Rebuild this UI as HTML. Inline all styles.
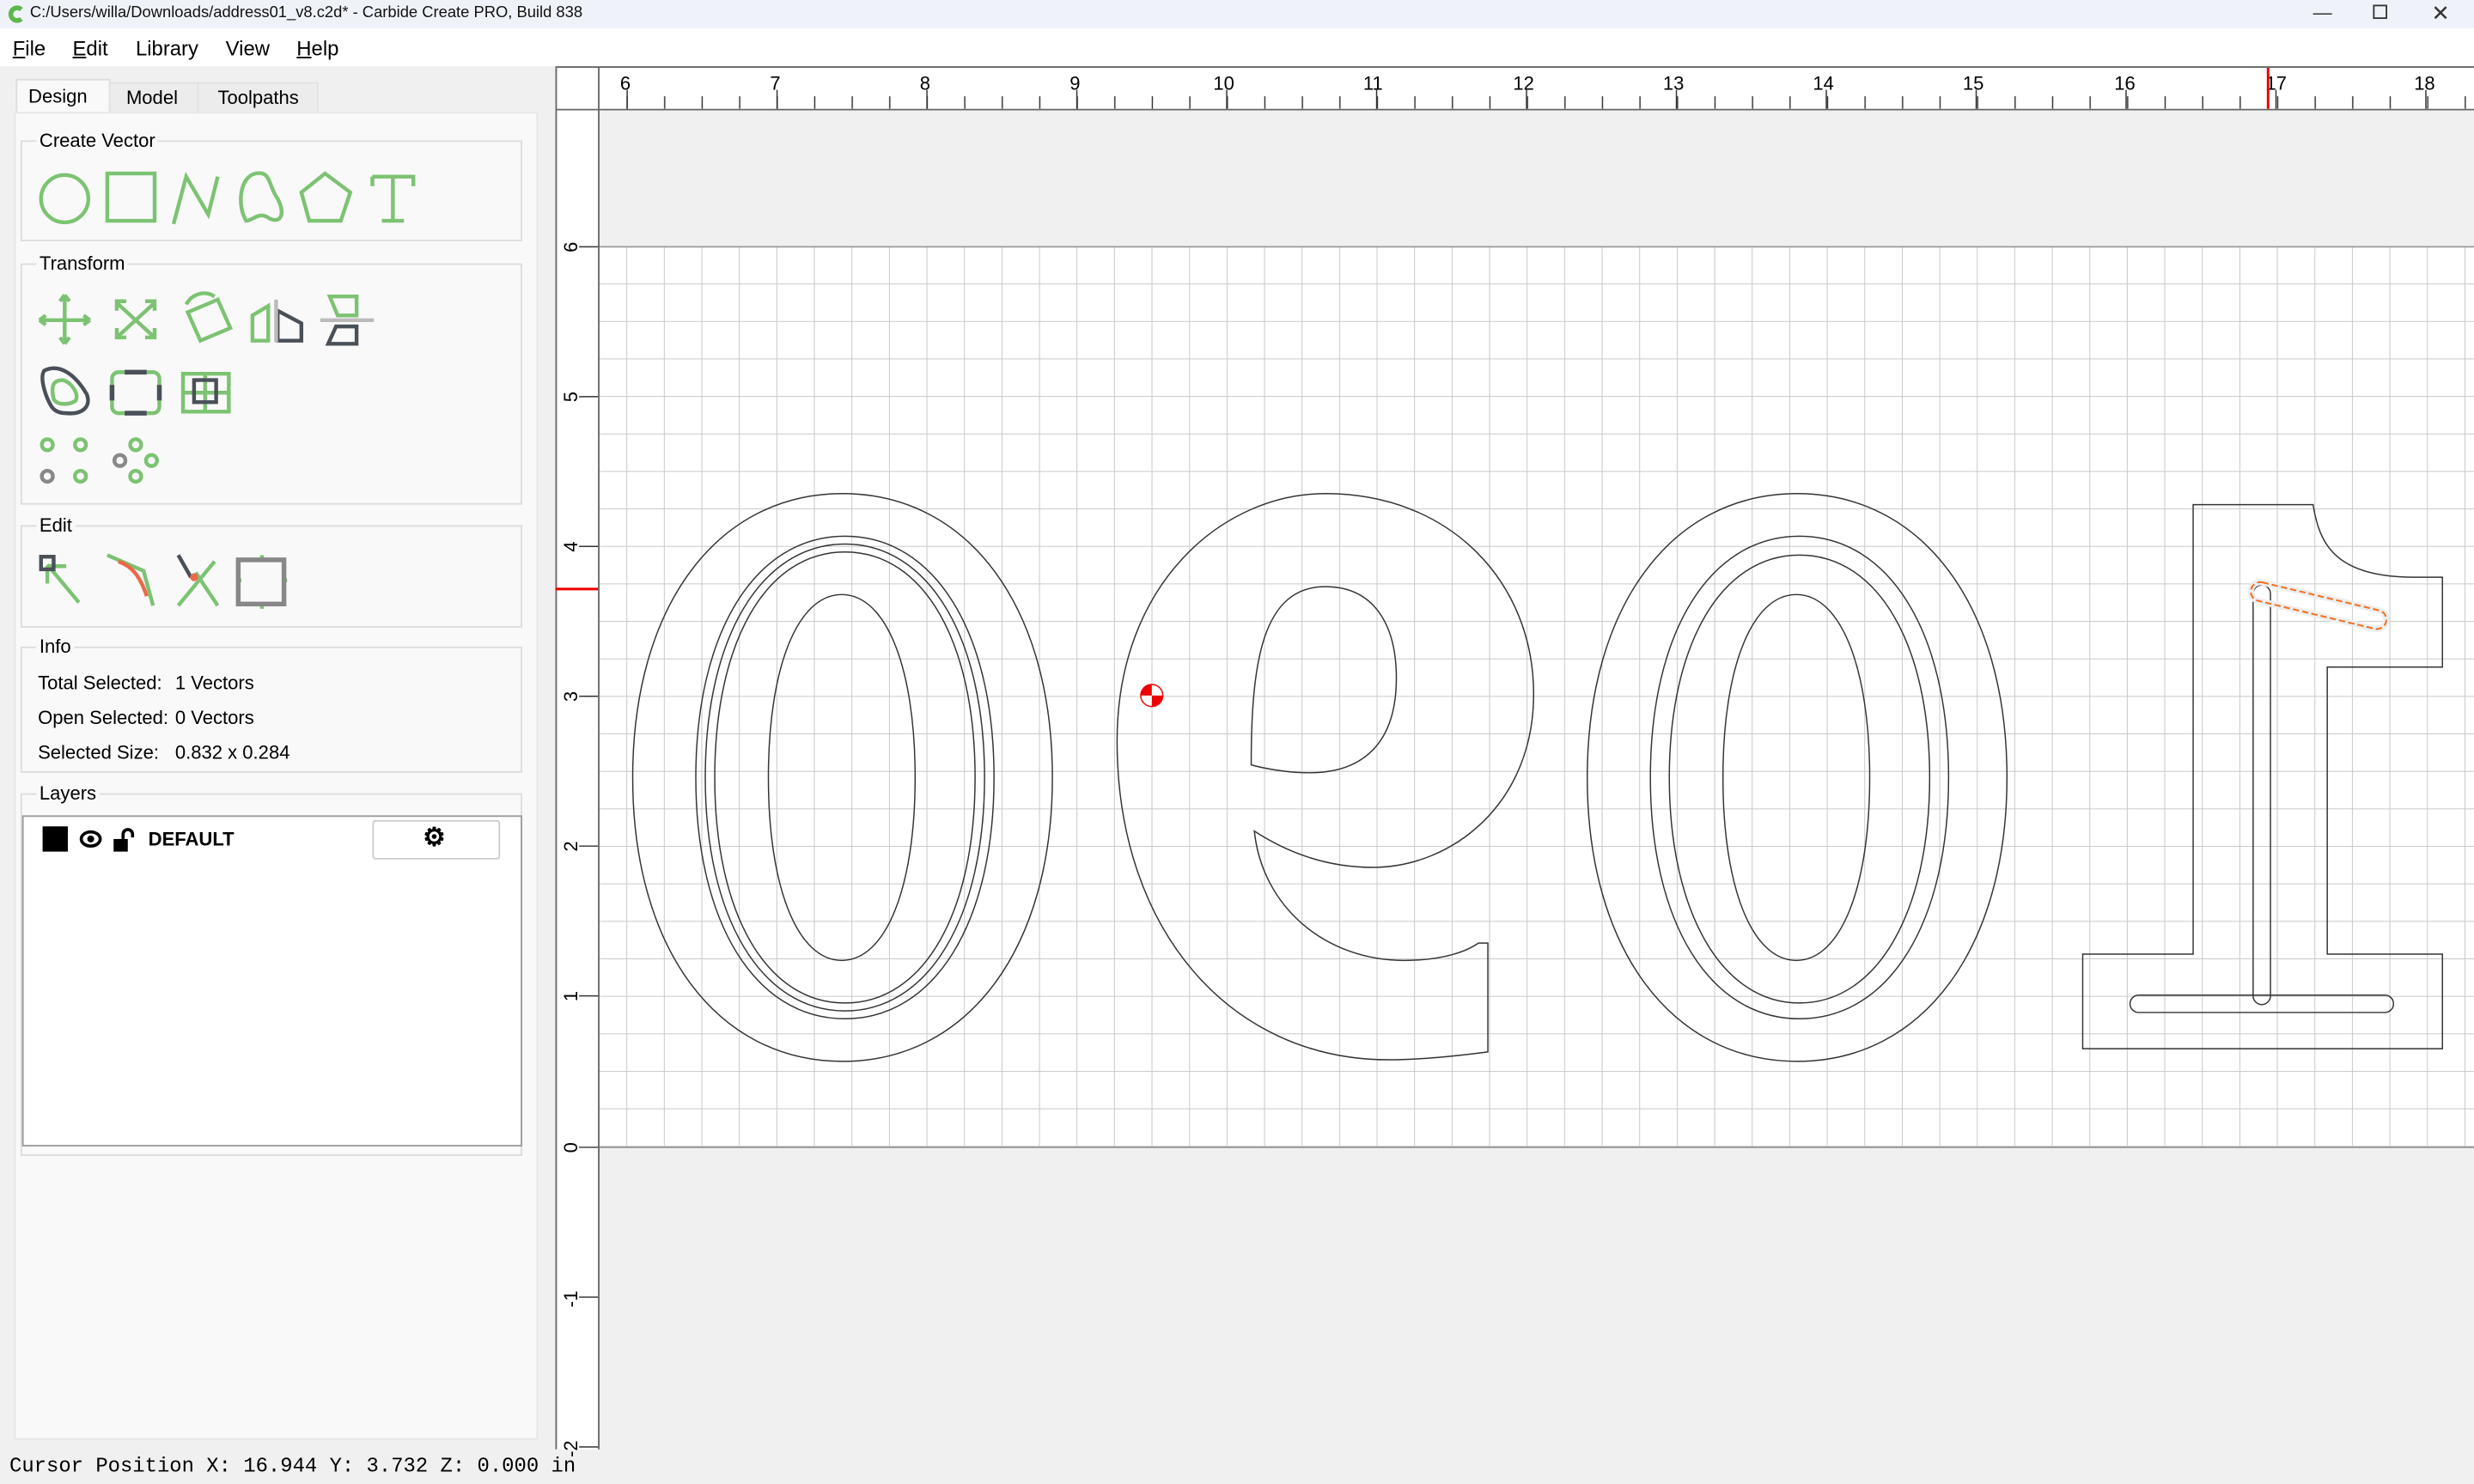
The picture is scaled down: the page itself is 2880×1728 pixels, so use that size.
<!DOCTYPE html>
<html><head><meta charset="utf-8"><style>
html,body{margin:0;padding:0;width:2880px;height:1728px;overflow:hidden;background:#f0f0f0}
#w{position:absolute;left:0;top:0;width:1568px;height:941px;transform:scale(1.83673,1.83634);transform-origin:0 0;font-family:"Liberation Sans",sans-serif;color:#000}
.a{position:absolute}
.t{font-size:12px;white-space:nowrap}
.grp{position:absolute;left:13px;width:316px;border:1px solid #dcdcdc;background:#f9f9f9}
.lbl{position:absolute;left:9px;top:-8px;background:#f9f9f9;padding:0 2px;font-size:12px}
</style></head><body><div id="w">
<div class="a" style="left:0;top:0;width:1568px;height:18px;background:#eff3f9"></div>
<svg class="a" style="left:4px;top:3px" width="12" height="12"><path d="M9.5,3 A4,4 0 1 0 9.5,9" fill="none" stroke="#5cb84a" stroke-width="3"/></svg>
<div class="a" style="left:19px;top:3px;font-size:10px;color:#111">C:/Users/willa/Downloads/address01_v8.c2d* - Carbide Create PRO, Build 838</div>
<div class="a" style="left:1466px;top:1px;font-size:12px;color:#333">&#8212;</div>
<div class="a" style="left:1504px;top:3px;width:7px;height:7px;border:1px solid #333"></div>
<div class="a" style="left:1541px;top:0px;font-size:14px;color:#333">&#10005;</div>
<div class="a" style="left:0;top:18px;width:1568px;height:24px;background:#fff"></div>
<div class="a" style="left:8px;top:23px;font-size:13px"><u>F</u>ile</div>
<div class="a" style="left:46px;top:23px;font-size:13px"><u>E</u>dit</div>
<div class="a" style="left:86px;top:23px;font-size:13px">Library</div>
<div class="a" style="left:143px;top:23px;font-size:13px">View</div>
<div class="a" style="left:188px;top:23px;font-size:13px"><u>H</u>elp</div>

<div class="a" style="left:10px;top:50px;width:58px;height:22px;background:#f9f9f9;border:1px solid #dcdcdc;border-bottom:none"></div>
<div class="a" style="left:69px;top:52px;width:55px;height:19px;background:#ececec;border:1px solid #e2e2e2"></div>
<div class="a" style="left:125px;top:52px;width:75px;height:19px;background:#ececec;border:1px solid #e2e2e2"></div>
<div class="a t" style="left:18px;top:54px">Design</div>
<div class="a t" style="left:80px;top:55px">Model</div>
<div class="a t" style="left:138px;top:55px">Toolpaths</div>
<div class="a" style="left:9px;top:71px;width:330px;height:840px;background:#f9f9f9;border:1px solid #e6e6e6"></div>

<div class="grp" style="top:89px;height:62px"><div class="lbl">Create Vector</div></div>
<div class="grp" style="top:167px;height:151px"><div class="lbl">Transform</div></div>
<div class="grp" style="top:333px;height:63px"><div class="lbl">Edit</div></div>
<div class="grp" style="top:410px;height:78px"><div class="lbl">Info</div></div>
<div class="grp" style="top:503px;height:228px"><div class="lbl">Layers</div></div>
<div class="a t" style="left:24px;top:426px">Total Selected:</div><div class="a t" style="left:111px;top:426px">1 Vectors</div>
<div class="a t" style="left:24px;top:448px">Open Selected:</div><div class="a t" style="left:111px;top:448px">0 Vectors</div>
<div class="a t" style="left:24px;top:470px">Selected Size:</div><div class="a t" style="left:111px;top:470px">0.832 x 0.284</div>
<div class="a" style="left:14px;top:517px;width:315px;height:208px;background:#fff;border:1px solid #999"></div>
<div class="a" style="left:27px;top:524px;width:16px;height:16px;background:#000"></div>
<svg class="a" style="left:50px;top:524px" width="44" height="18">
<ellipse cx="7.5" cy="8" rx="6" ry="4.5" fill="none" stroke="#000" stroke-width="2"/><circle cx="7.5" cy="8" r="2.2"/>
<rect x="22" y="8" width="9" height="8" fill="#000"/><path d="M28,8 V5 A3,3 0 0 1 34,5 V7" fill="none" stroke="#000" stroke-width="2"/></svg>
<div class="a" style="left:94px;top:525px;font-size:12px;font-weight:bold">DEFAULT</div>
<div class="a" style="left:236px;top:520px;width:79px;height:23px;border:1px solid #ccc;border-radius:2px;background:#fff"></div>
<div class="a" style="left:268px;top:521px;font-size:16px;font-weight:bold">&#9881;</div>

<svg class="a" style="left:0;top:0" width="340" height="400" fill="none" stroke-width="2.4">
<g stroke="#7cc372">
<circle cx="41" cy="126" r="15"/>
<rect x="68" y="110" width="30" height="30"/>
<path d="M110,142 L118,112 L132,136 L138,112"/>
<path d="M156,140 C150,130 152,112 162,110 C172,108 170,118 176,126 C182,138 176,142 170,138 C164,134 160,140 156,140Z"/>
<path d="M206,110 L222,122 L216,140 L196,140 L191,122Z"/>
<path d="M236,112 H262 V118 M236,112 V118 M249,112 V140 M242,140 H256"/>
<path d="M41,187 V218 M25,203 H57 M41,187 l-3,4 M41,187 l3,4 M41,218 l-3,-4 M41,218 l3,-4 M25,203 l4,-3 M25,203 l4,3 M57,203 l-4,-3 M57,203 l-4,3"/>
<path d="M74,192 L98,214 M98,192 L74,214 M74,197 V191 H80 M92,191 H98 V197 M74,208 V214 H80 M92,214 H98 V208"/>
<path d="M119,198 L138,190 L146,208 L127,216Z M118,193 C122,186 130,184 136,188"/>
<path d="M160,216 V200 L170,194 V216Z"/>
<path d="M209,188 H226 V200 H214Z"/>
<path d="M116,237 H145 V261 H116Z M130,237 V261 M116,249 H145"/>
<path d="M71,244 V240 A4,4 0 0 1 75,236 H79 M93,236 H97 A4,4 0 0 1 101,240 V244 M71,254 V258 A4,4 0 0 0 75,262 H79 M93,262 H97 A4,4 0 0 0 101,258 V254"/>
<circle cx="30" cy="282" r="3.5"/><circle cx="51" cy="282" r="3.5"/><circle cx="51" cy="302" r="3.5"/>
<circle cx="86" cy="282" r="3.5"/><circle cx="96" cy="292" r="3.5"/><circle cx="86" cy="302" r="3.5"/>
<path d="M30,358 L50,382 M30,359 V370 M30,359 H42"/>
<path d="M68,352 L91,362 L97,384"/>
<path d="M113,384 L136,356 M124,363 L138,384"/>
<path d="M166,352 V356 M166,382 V386 M150,368 H153 M179,368 H182"/>
</g>
<g stroke="#4a5058">
<path d="M176,197 L191,205 V216 H176Z"/>
<path d="M213,207 H226 V218 H208Z"/>
<path d="M28,235 C38,230 48,238 55,250 C58,258 52,263 42,262 C34,262 32,258 29,250 C27,244 26,238 28,235Z"/>
<path d="M79,236 H93 M79,262 H93 M71,244 V254 M101,244 V254" stroke-width="3"/>
<rect x="123" y="241" width="14" height="14"/>
<rect x="26" y="353" width="8" height="8"/>
<path d="M113,352 L121,366"/>
</g>
<g stroke="#7cc372"><path d="M34,253 C32,244 34,241 40,241 C46,243 50,250 48,254 C44,257 36,257 34,253Z"/></g>
<circle cx="30" cy="302" r="3.5" stroke="#888"/><circle cx="76" cy="292" r="3.5" stroke="#888"/>
<path d="M175,190 V217 M203,203 H237" stroke="#bbb"/>
<rect x="151" y="355" width="29" height="28" stroke="#888" stroke-width="3"/>
<path d="M75,356 C84,359 89,366 93,378" stroke="#ea6a48"/>
<circle cx="123" cy="366" r="2.5" fill="#ea6a48" stroke="none"/>
</svg>

<div class="a" style="left:6px;top:922px;font-family:'Liberation Mono',monospace;font-size:13px">Cursor Position X: 16.944 Y: 3.732 Z: 0.000 in</div>

<svg class="a" style="left:0;top:0" width="1568" height="941">
<defs>
<pattern id="g" patternUnits="userSpaceOnUse" x="397" y="156" width="23.775" height="23.775"><path d="M0,0 V23.775 M0,0 H23.775" stroke="#c9c9c9" stroke-width="1.1" fill="none"/></pattern>
<pattern id="tx" patternUnits="userSpaceOnUse" x="397" y="0" width="23.775" height="100"><path d="M0.5,61 V69" stroke="#333" stroke-width="0.8"/></pattern>
<pattern id="ty" patternUnits="userSpaceOnUse" x="0" y="156" width="100" height="23.775"><path d="M371,0.5 H379" stroke="#333" stroke-width="0.8"/></pattern>
</defs>
<rect x="352" y="42" width="1216" height="877" fill="#f0f0f0"/>
<rect x="379" y="156" width="1189" height="571" fill="#fff"/>
<rect x="379" y="156" width="1189" height="571" fill="url(#g)"/>
<path d="M379,156.5 H1568 M379,727.5 H1568" stroke="#999" stroke-width="1"/>
<rect x="352" y="42" width="1216" height="27" fill="#fff"/>
<rect x="352" y="42" width="27" height="877" fill="#fff"/>
<rect x="379" y="42" width="1189" height="27" fill="url(#tx)"/>
<rect x="352" y="69" width="27" height="850" fill="url(#ty)"/>
<path d="M352.5,42 V919 M379.5,42 V919 M352,69.5 H1568 M352,42.5 H1568" stroke="#666" stroke-width="1"/>
<g stroke="#333" stroke-width="0.8">
<path d="M397.5,57V69 M492.5,57V69 M587.5,57V69 M682.5,57V69 M777.5,57V69 M872.5,57V69 M967.5,57V69 M1062.5,57V69 M1157.5,57V69 M1252.5,57V69 M1347.5,57V69 M1442.5,57V69 M1537.5,57V69"/>
<path d="M367,156.5H379 M367,251.5H379 M367,346.5H379 M367,441.5H379 M367,536.5H379 M367,631.5H379 M367,727.5H379 M367,822.5H379 M367,917.5H379"/>
</g>
<g font-family="Liberation Sans" font-size="12" fill="#000">
<text x="393" y="57">6</text><text x="488" y="57">7</text><text x="583" y="57">8</text><text x="678" y="57">9</text><text x="769" y="57">10</text><text x="864" y="57">11</text><text x="959" y="57">12</text><text x="1054" y="57">13</text><text x="1149" y="57">14</text><text x="1244" y="57">15</text><text x="1340" y="57">16</text><text x="1436" y="57">17</text><text x="1530" y="57">18</text>
<g transform="rotate(-90)">
<text x="-160" y="366">6</text><text x="-255" y="366">5</text><text x="-350" y="366">4</text><text x="-445" y="366">3</text><text x="-540" y="366">2</text><text x="-635" y="366">1</text><text x="-731" y="366">0</text><text x="-829" y="366">-1</text><text x="-924" y="366">-2</text>
</g></g>
<path d="M1437.5,43 V69 M352,373.5 H379" stroke="#e00" stroke-width="1.6"/>
<g fill="none" stroke="#333" stroke-width="0.8">
<path d="M534,313 C614,313 667,385 667,493 C667,601 614,673 534,673 C454,673 401,601 401,493 C401,385 454,313 534,313Z"/>
<path d="M535.5,340 C592.5,340 630,401 630,493 C630,585 592.5,646 535.5,646 C478.5,646 441,585 441,493 C441,401 478.5,340 535.5,340Z"/>
<path d="M535.5,345 C588.5,345 624,404 624,493 C624,582 588.5,641 535.5,641 C482.5,641 447,582 447,493 C447,404 482.5,345 535.5,345Z"/>
<path d="M535.5,350 C585.5,350 618,407 618,493 C618,579 585.5,636 535.5,636 C485.5,636 453,579 453,493 C453,407 485.5,350 535.5,350Z"/>
<path d="M533.5,377 C561.5,377 580,423 580,493 C580,563 561.5,609 533.5,609 C505.5,609 487,563 487,493 C487,423 505.5,377 533.5,377Z"/>
<g transform="translate(605,0)">
<path d="M534,313 C614,313 667,385 667,493 C667,601 614,673 534,673 C454,673 401,601 401,493 C401,385 454,313 534,313Z"/>
<path d="M535.5,340 C592.5,340 630,401 630,493 C630,585 592.5,646 535.5,646 C478.5,646 441,585 441,493 C441,401 478.5,340 535.5,340Z"/>
<path d="M535.5,352 C585.5,352 618,409 618,493 C618,577 585.5,636 535.5,636 C485.5,636 453,577 453,493 C453,409 485.5,352 535.5,352Z"/>
<path d="M533.5,377 C561.5,377 580,423 580,493 C580,563 561.5,609 533.5,609 C505.5,609 487,563 487,493 C487,423 505.5,377 533.5,377Z"/>
</g>
<path d="M943,598 L943,667 C920,670 900,672 880,672 C780,672 708,590 708,470 C708,370 775,313 840,313 C920,313 972,370 972,440 C972,510 920,550 870,550 C840,550 815,540 795,527 C800,575 840,609 890,609 C915,609 930,603 937,598 Z"/>
<path d="M840,372 C870,372 885,395 885,430 C885,470 865,490 830,490 C815,490 800,487 793,485 C793,420 800,372 840,372Z"/>
<path d="M1390,320 L1466,320 C1470,345 1480,366 1530,366 L1548,366 L1548,423 L1475,423 L1475,605 L1548,605 L1548,665 L1320,665 L1320,605 L1390,605 Z"/>
<rect x="1428" y="371" width="11" height="266" rx="5.5"/>
<rect x="1350" y="631" width="167" height="11" rx="5.5"/>
</g>
<g transform="translate(1469.5,384) rotate(13.5)">
<rect x="-44" y="-6" width="88" height="12" rx="6" fill="none" stroke="#eee" stroke-width="4"/>
<rect x="-44" y="-6" width="88" height="12" rx="6" fill="none" stroke="#f07020" stroke-width="1.1" stroke-dasharray="4 2"/>
</g>
<circle cx="730" cy="441" r="7" fill="#fff" stroke="#e00" stroke-width="0.8"/>
<path d="M730,441 V434 A7,7 0 0 0 723,441Z M730,441 V448 A7,7 0 0 0 737,441Z" fill="#e00"/>
</svg>
</div></body></html>
